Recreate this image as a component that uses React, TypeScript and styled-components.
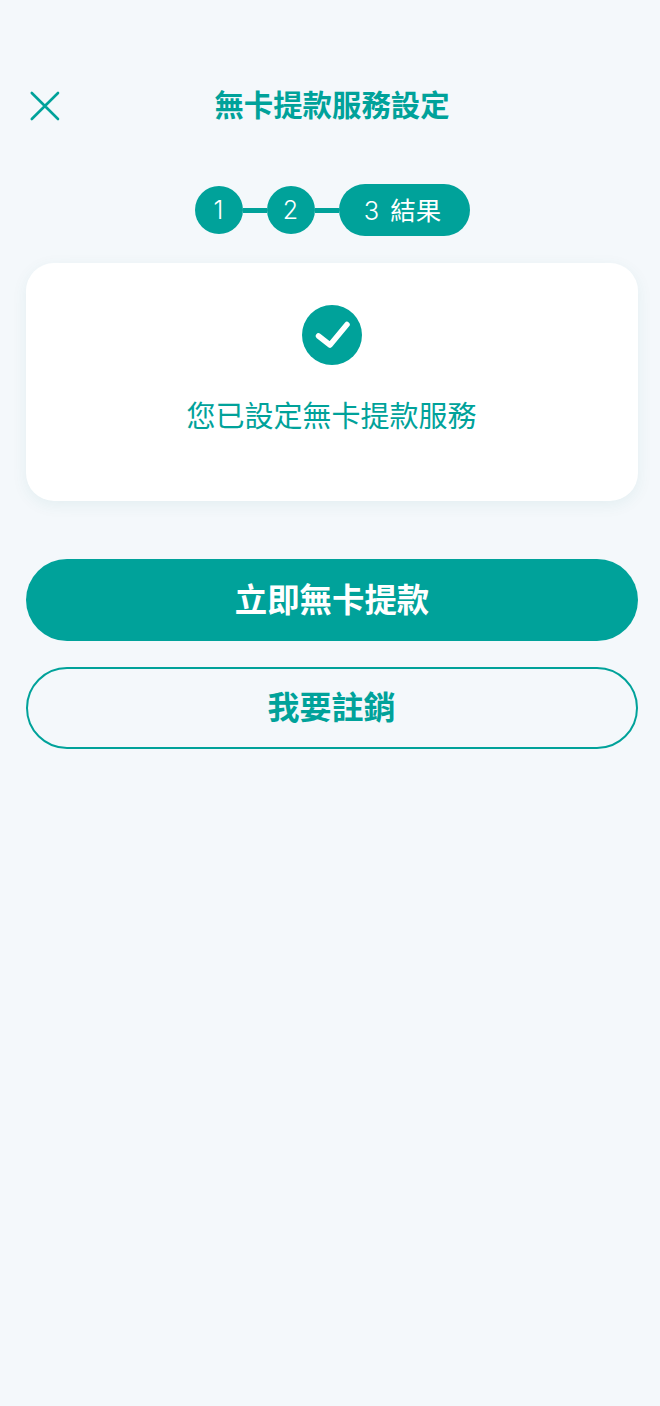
import React from "react";
import styled, { createGlobalStyle } from "styled-components";

const GlobalStyle = createGlobalStyle`
  html, body {
    margin: 0;
    padding: 0;
    background: #f4f8fb;
  }
  * {
    box-sizing: border-box;
  }
`;

const App = () => {
  return (
    <Page>
      <GlobalStyle />
      <Header>
        <CloseButton aria-label="close">
          <svg width="32" height="32" viewBox="0 0 32 32" fill="none">
            <path
              d="M2.8 3L29 29M29 3L2.8 29"
              stroke="#00a29a"
              strokeWidth="2.6"
              strokeLinecap="round"
            />
          </svg>
        </CloseButton>
        <Title>無卡提款服務設定</Title>
      </Header>
      <Steps>
        <StepDot>1</StepDot>
        <StepLine />
        <StepDot>2</StepDot>
        <StepLine />
        <StepPill>
          <span>3</span>
          <StepLabel>結果</StepLabel>
        </StepPill>
      </Steps>
      <Card>
        <CheckBadge>
          <svg width="36" height="30" viewBox="0 0 36 30" fill="none">
            <path
              d="M4.5 16L16 25L33 4.5"
              stroke="#fff"
              strokeWidth="5.5"
              strokeLinecap="round"
              strokeLinejoin="round"
            />
          </svg>
        </CheckBadge>
        <CardText>您已設定無卡提款服務</CardText>
      </Card>
      <Actions>
        <PrimaryButton>立即無卡提款</PrimaryButton>
        <OutlineButton>我要註銷</OutlineButton>
      </Actions>
    </Page>
  );
};

export default App;

const fontStack = `"Noto Sans CJK TC", "Noto Sans", sans-serif`;

const Page = styled.div`
  width: 660px;
  height: 1406px;
  padding: 86px 22px 0 26px;
  background: #f4f8fb;
  color: #00a29a;
  font-family: ${fontStack};
  overflow: hidden;
`;

const Header = styled.header`
  position: relative;
  display: flex;
  justify-content: center;
  align-items: center;
  height: 40px;
  padding-bottom: 6px;
`;

const CloseButton = styled.button`
  position: absolute;
  left: 3px;
  top: 4px;
  display: flex;
  width: 32px;
  height: 32px;
  padding: 0;
  border: 0;
  background: none;
`;

const Title = styled.h1`
  margin: 0;
  font-size: 29.4px;
  line-height: 40px;
  font-weight: 700;
  color: #00a29a;
`;

const Steps = styled.div`
  display: flex;
  justify-content: center;
  align-items: center;
  margin-top: 58px;
  height: 52px;
  padding-left: 1px;
`;

const StepDot = styled.div`
  display: flex;
  align-items: center;
  justify-content: center;
  width: 48px;
  height: 48px;
  padding-right: 1px;
  border-radius: 50%;
  background: #00a29a;
  color: #fff;
  font-family: Inter, "Noto Sans", sans-serif;
  font-size: 25px;
  font-weight: 300;
`;

const StepLine = styled.div`
  width: 24px;
  height: 5px;
  background: #00a29a;
`;

const StepPill = styled.div`
  display: flex;
  align-items: center;
  justify-content: center;
  gap: 11px;
  width: 131px;
  height: 52px;
  padding-right: 4px;
  border-radius: 26px;
  background: #00a29a;
  color: #fff;
  font-family: Inter, "Noto Sans CJK TC", sans-serif;
  font-size: 25.5px;
  font-weight: 300;
`;

const StepLabel = styled.span`
  padding-bottom: 3px;
  font-weight: 400;
`;

const Card = styled.section`
  display: flex;
  flex-direction: column;
  align-items: center;
  height: 238px;
  margin-top: 27px;
  padding-top: 42px;
  border-radius: 28px;
  background: #fff;
  box-shadow: 0 4px 16px rgba(0, 110, 120, 0.07);
`;

const CheckBadge = styled.div`
  display: flex;
  align-items: center;
  justify-content: center;
  width: 60px;
  height: 60px;
  border-radius: 50%;
  background: #00a29a;
`;

const CardText = styled.p`
  margin: 28px 1px 0 0;
  font-size: 29px;
  line-height: 42px;
  font-weight: 400;
  color: #00a29a;
`;

const Actions = styled.div`
  display: flex;
  flex-direction: column;
  gap: 26px;
  margin-top: 58px;
`;

const PrimaryButton = styled.button`
  height: 82px;
  padding: 0 0 6px;
  border: 0;
  border-radius: 41px;
  background: #00a29a;
  color: #fff;
  font-family: ${fontStack};
  font-size: 32.4px;
  font-weight: 700;
`;

const OutlineButton = styled.button`
  height: 82px;
  padding: 0 1px 7px 0;
  border: 2px solid #00a29a;
  border-radius: 41px;
  background: transparent;
  color: #00a29a;
  font-family: ${fontStack};
  font-size: 32px;
  font-weight: 700;
`;
